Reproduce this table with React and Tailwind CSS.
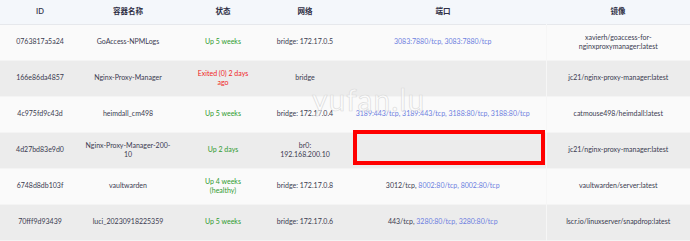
const rows = [
  {
    id: "0763817a5a24",
    name: "GoAccess-NPMLogs",
    status: ["Up 5 weeks"],
    ok: true,
    net: ["bridge: 172.17.0.5"],
    ports: { plain: "", links: "3083:7880/tcp, 3083:7880/tcp" },
    image: ["xavierh/goaccess-for-", "nginxproxymanager:latest"],
  },
  {
    id: "166e86da4857",
    name: "Nginx-Proxy-Manager",
    status: ["Exited (0) 2 days", "ago"],
    ok: false,
    net: ["bridge"],
    ports: { plain: "", links: "" },
    image: ["jc21/nginx-proxy-manager:latest"],
  },
  {
    id: "4c975fd9c43d",
    name: "heimdall_cm498",
    status: ["Up 5 weeks"],
    ok: true,
    net: ["bridge: 172.17.0.4"],
    ports: { plain: "", links: "3189:443/tcp, 3189:443/tcp, 3188:80/tcp, 3188:80/tcp" },
    image: ["catmouse498/heimdall:latest"],
  },
  {
    id: "4d27bd83e9d0",
    name: ["Nginx-Proxy-Manager-200-", "10"],
    status: ["Up 2 days"],
    ok: true,
    net: ["br0:", "192.168.200.10"],
    ports: { plain: "", links: "" },
    image: ["jc21/nginx-proxy-manager:latest"],
  },
  {
    id: "6748d8db103f",
    name: "vaultwarden",
    status: ["Up 4 weeks", "(healthy)"],
    ok: true,
    net: ["bridge: 172.17.0.8"],
    ports: { plain: "3012/tcp, ", links: "8002:80/tcp, 8002:80/tcp" },
    image: ["vaultwarden/server:latest"],
  },
  {
    id: "70fff9d93439",
    name: "luci_20230918225359",
    status: ["Up 5 weeks"],
    ok: true,
    net: ["bridge: 172.17.0.6"],
    ports: { plain: "443/tcp, ", links: "3280:80/tcp, 3280:80/tcp" },
    image: ["lscr.io/linuxserver/snapdrop:latest"],
  },
]

const Lines = ({ lines }) => (
  <>
    {[].concat(lines).map((l, i) => (
      <div key={i}>{l}</div>
    ))}
  </>
)

export default function App() {
  return (
    <div
      className="relative w-[690px] h-[241px] overflow-hidden bg-[#fafafa] text-[#3b3b50] text-[7px] leading-[9.5px]"
      style={{ fontFamily: '"Lato", "Noto Sans CJK SC", sans-serif' }}
    >
      <table className="table-fixed w-[690px] border-collapse text-center">
        <colgroup>
          <col className="w-[80px]" />
          <col className="w-[96px]" />
          <col className="w-[94px]" />
          <col className="w-[70px]" />
          <col className="w-[206px]" />
          <col className="w-[144px]" />
        </colgroup>
        <thead>
          <tr className="h-[24px] bg-[#f4f7fb] border-b border-[#e6e8ec] text-[7.5px] text-[#2f2f45]">
            <th className="font-semibold">ID</th>
            <th className="font-semibold">容器名称</th>
            <th className="font-semibold">状态</th>
            <th className="font-semibold">网络</th>
            <th className="font-semibold">端口</th>
            <th className="font-semibold">镜像</th>
          </tr>
        </thead>
        <tbody>
          {rows.map((r, i) => (
            <tr
              key={r.id}
              className={`h-[36px] border-b border-[#f4f4f4] ${i % 2 === 0 ? "bg-[#fafafa]" : "bg-[#ececec]"}`}
            >
              <td>{r.id}</td>
              <td>
                <Lines lines={r.name} />
              </td>
              <td className={r.ok ? "text-[#2f9a2f]" : "text-[#f01e1e]"}>
                <Lines lines={r.status} />
              </td>
              <td className="whitespace-nowrap">
                <Lines lines={r.net} />
              </td>
              <td className="border-r border-[#f6f6f6] whitespace-nowrap">
                {r.ports.plain}
                <span className="text-[#6d7ee0]">{r.ports.links}</span>
              </td>
              <td className="whitespace-nowrap">
                <Lines lines={r.image} />
              </td>
            </tr>
          ))}
        </tbody>
      </table>

      {/* watermark */}
      <div className="absolute left-[312px] top-[82px] text-[30px] leading-[34px] tracking-[1px] text-white/60 [-webkit-text-stroke:0.7px_#dcdcdc] select-none">
        yufan.lu
      </div>

      {/* red highlight */}
      <div className="absolute left-[353px] top-[130px] w-[192px] h-[35px] border-4 border-[#ff0000]" />
    </div>
  )
}
